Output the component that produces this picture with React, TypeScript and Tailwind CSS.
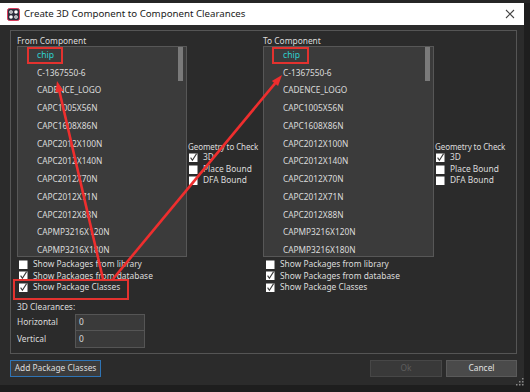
import React from 'react'

const parts = [
  'C-1367550-6',
  'CADENCE_LOGO',
  'CAPC1005X56N',
  'CAPC1608X86N',
  'CAPC2012X100N',
  'CAPC2012X140N',
  'CAPC2012X70N',
  'CAPC2012X71N',
  'CAPC2012X88N',
  'CAPMP3216X120N',
  'CAPMP3216X180N',
]

// red annotation arrows: tail -> tip
const arrows = [
  { x1: 103, y1: 279, x2: 57, y2: 81 },
  { x1: 113, y1: 279, x2: 282, y2: 75 },
]

function head(a: { x1: number; y1: number; x2: number; y2: number }) {
  const dx = a.x2 - a.x1
  const dy = a.y2 - a.y1
  const len = Math.hypot(dx, dy)
  const ux = dx / len
  const uy = dy / len
  const bx = a.x2 - ux * 11
  const by = a.y2 - uy * 11
  const px = -uy * 4
  const py = ux * 4
  return `${a.x2},${a.y2} ${bx + px},${by + py} ${bx - px},${by - py}`
}

function Check({ on }: { on?: boolean }) {
  return (
    <svg width="9" height="9" viewBox="0 0 9 9" className="shrink-0">
      <rect x="0" y="0.5" width="8.5" height="8.5" fill="#ffffff" />
      {on && <path d="M1.6 4.6 L3.4 7.2 L7.6 0.6" fill="none" stroke="#3a3a3a" strokeWidth="1.1" />}
    </svg>
  )
}

function CheckRow({ label, on, h = 'h-[11.5px]' }: { label: string; on?: boolean; h?: string }) {
  return (
    <div className={`flex items-center gap-[5px] ${h}`}>
      <Check on={on} />
      <span className="text-[8.4px] leading-none text-[#dcdcdc] whitespace-nowrap">{label}</span>
    </div>
  )
}

function PartList({ boxMl, boxPl }: { boxMl: string; boxPl: string }) {
  return (
    <div className="flex h-[211px] border border-[#575757] bg-[#3b3b3b] overflow-hidden">
      <div className="flex-1 flex flex-col">
        <div className="h-[17.75px] flex items-center">
          <span className={`${boxMl} ${boxPl} pr-[7px] h-[17px] flex items-center border-2 border-[#e3322f] text-[8.6px] leading-none text-[#2ed0d0]`}>
            chip
          </span>
        </div>
        {parts.map((p) => (
          <div key={p} className="h-[17.75px] shrink-0 flex items-center pl-[19px] text-[8.3px] leading-none text-[#dcdcdc]">
            {p}
          </div>
        ))}
      </div>
      <div className="w-[9px] pl-[1px]">
        <div className="w-[5px] h-[34px] bg-[#7a7a7a]" />
      </div>
    </div>
  )
}

function Geometry() {
  return (
    <div className="mt-[105px] flex flex-col">
      <div className="h-[11px] flex items-center text-[8px] tracking-[-0.1px] leading-none text-[#dcdcdc] whitespace-nowrap">Geometry to Check</div>
      <div className="pl-[1px]">
        <CheckRow label="3D" on h="h-[11.4px]" />
        <CheckRow label="Place Bound" h="h-[11.4px]" />
        <CheckRow label="DFA Bound" h="h-[11.4px]" />
      </div>
    </div>
  )
}

export default function App() {
  return (
    <div className="relative w-[530px] h-[392px] bg-[#1e1e1e] overflow-hidden" style={{ fontFamily: '"Noto Sans", "Open Sans", sans-serif' }}>
      <div className="h-[3px] bg-[#262626]" />
      <div className="w-[524px]">
        {/* title bar */}
        <div className="h-[22px] bg-white flex items-center pl-[7px] pr-[9px]">
          <svg width="13" height="13" viewBox="0 0 13 13">
            <rect x="0.5" y="0.5" width="12" height="12" rx="2" fill="#2d2d3c" stroke="#d83a5a" />
            <circle cx="4" cy="4" r="1.8" fill="#fff" />
            <circle cx="9" cy="4" r="1.8" fill="#fff" />
            <circle cx="4" cy="9" r="1.8" fill="#fff" />
            <circle cx="9" cy="9" r="1.8" fill="#fff" />
            <circle cx="4" cy="4" r="0.7" fill="#2d2d3c" />
            <circle cx="9" cy="9" r="0.7" fill="#2d2d3c" />
          </svg>
          <span className="ml-[4px] text-[9.7px] leading-none text-[#1a1a1a]">Create 3D Component to Component Clearances</span>
          <svg width="10" height="10" viewBox="0 0 10 10" className="ml-auto">
            <path d="M1 1 L9 9 M9 1 L1 9" stroke="#444" strokeWidth="1.1" />
          </svg>
        </div>

        {/* body */}
        <div className="h-[360px] bg-[#2b2b2b] pl-[10px] pr-[7px] pt-[5px]">
          <div className="h-[324px] border border-[#555555] pl-[6px] pt-[5px] flex">
            <div className="w-[170px] flex flex-col">
              <div className="h-[10px] flex items-center text-[8.4px] leading-none text-[#dcdcdc]">From Component</div>
              <PartList boxMl="ml-[9px]" boxPl="pl-[8px]" />
              <div className="mt-[1.5px] pl-[2px]">
                <CheckRow label="Show Packages from library" />
                <CheckRow label="Show Packages from database" on />
                <CheckRow label="Show Package Classes" on />
              </div>
              <div className="mt-[9px] h-[11px] flex items-center text-[8.4px] leading-none text-[#dcdcdc]">3D Clearances:</div>
              <div className="mt-[1px] flex h-[17px]">
                <div className="w-[58px] flex items-center text-[8.4px] leading-none text-[#dcdcdc]">Horizontal</div>
                <div className="w-[70px] border border-[#555] bg-[#3a3a3a] flex items-center pl-[3px] text-[8.4px] leading-none text-[#dcdcdc]">0</div>
              </div>
              <div className="flex h-[17px]">
                <div className="w-[58px] flex items-center text-[8.4px] leading-none text-[#dcdcdc]">Vertical</div>
                <div className="w-[70px] border border-[#555] border-t-0 bg-[#3a3a3a] flex items-center pl-[3px] text-[8.4px] leading-none text-[#dcdcdc]">0</div>
              </div>
            </div>
            <div className="w-[76px] pl-[1px]">
              <Geometry />
            </div>
            <div className="w-[171px] flex flex-col">
              <div className="h-[10px] flex items-center text-[8.4px] leading-none text-[#dcdcdc]">To Component</div>
              <PartList boxMl="ml-[8px]" boxPl="pl-[9px]" />
              <div className="mt-[1.5px] pl-[3px]">
                <CheckRow label="Show Packages from library" />
                <CheckRow label="Show Packages from database" on />
                <CheckRow label="Show Package Classes" on />
              </div>
            </div>
            <div className="flex-1 pl-[1px]">
              <Geometry />
            </div>
          </div>

          {/* buttons */}
          <div className="mt-[6px] flex h-[17px]">
            <button className="w-[91px] border border-[#2f74b5] bg-[#3c3c3c] text-[8.4px] leading-none text-[#dcdcdc]">Add Package Classes</button>
            <div className="ml-auto flex gap-[4px]">
              <button className="w-[72px] border border-[#474747] bg-[#393939] text-[8.4px] leading-none text-[#5e5e5e]">Ok</button>
              <button className="w-[71px] border border-[#5a5a5a] bg-[#4a4a4a] text-[8.4px] leading-none text-[#e0e0e0]">Cancel</button>
            </div>
          </div>
        </div>
      </div>

      {/* resize grip */}
      <svg width="8" height="8" viewBox="0 0 8 8" className="absolute left-[516px] top-[378px]">
        <rect x="6" y="0" width="1.5" height="1.5" fill="#8a8a8a" />
        <rect x="3" y="3" width="1.5" height="1.5" fill="#8a8a8a" />
        <rect x="6" y="3" width="1.5" height="1.5" fill="#8a8a8a" />
        <rect x="0" y="6" width="1.5" height="1.5" fill="#8a8a8a" />
        <rect x="3" y="6" width="1.5" height="1.5" fill="#8a8a8a" />
        <rect x="6" y="6" width="1.5" height="1.5" fill="#8a8a8a" />
      </svg>

      {/* red annotations */}
      <svg width="530" height="392" className="absolute inset-0 pointer-events-none">
        <rect x="14" y="280" width="114" height="19" fill="none" stroke="#e3322f" strokeWidth="2" />
        {arrows.map((a, i) => (
          <g key={i}>
            <line x1={a.x1} y1={a.y1} x2={a.x2 - (a.x2 - a.x1) * 0.03} y2={a.y2 - (a.y2 - a.y1) * 0.03} stroke="#ee2e2e" strokeWidth="2.6" />
            <polygon points={head(a)} fill="#ee2e2e" />
          </g>
        ))}
      </svg>
    </div>
  )
}
